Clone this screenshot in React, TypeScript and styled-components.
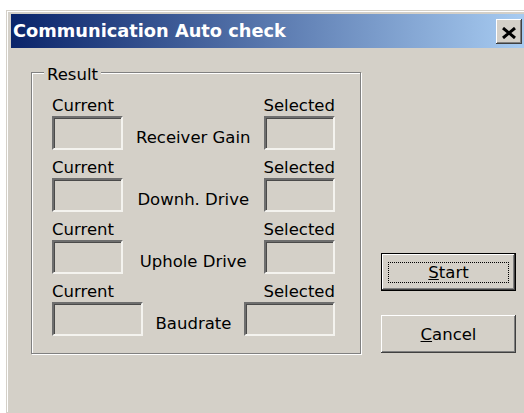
import React from 'react';
import styled, { createGlobalStyle } from 'styled-components';

const Page = createGlobalStyle`
    html, body {
        margin: 0;
        background: #ffffff;
        overflow: hidden;
    }
    body {
        font-family: "DejaVu Sans", Tahoma, sans-serif;
    }
`;

const Window = styled.div`
    box-sizing: border-box;
    margin: 10px 0 0 6px;
    width: 528px;
    min-width: 528px;
    height: 403px;
    padding: 3px 4px 0 4px;
    background: #d4d0c8;
    border: 1px solid #d4d0c8;
    box-shadow: inset 1px 1px 0 #ffffff;
    display: flex;
    flex-direction: column;
`;

const TitleBar = styled.div`
    height: 34px;
    display: flex;
    align-items: center;
    justify-content: space-between;
    padding: 0 7px 0 2px;
    background: linear-gradient(to right, #0a246a, #a6caf0 98%);
`;

const Title = styled.span`
    color: #ffffff;
    font-weight: bold;
    font-size: 17.8px;
    line-height: 20px;
`;

const CloseButton = styled.div`
    box-sizing: border-box;
    width: 26px;
    height: 25px;
    margin-top: 1px;
    display: flex;
    align-items: center;
    justify-content: center;
    padding-top: 3px;
    background: #d4d0c8;
    box-shadow: inset -1px -1px 0 #404040, inset 1px 1px 0 #ffffff,
        inset -2px -2px 0 #808080;
`;

const Body = styled.div`
    display: flex;
    align-items: flex-start;
    padding: 24px 0 0 20px;
`;

const GroupBox = styled.div`
    position: relative;
    box-sizing: border-box;
    width: 330px;
    height: 282px;
    padding: 23px 25px 0 20px;
    border: 1px solid #808080;
    box-shadow: inset 1px 1px 0 #ffffff, 1px 1px 0 #ffffff;
    display: flex;
    flex-direction: column;
    gap: 8px;
`;

const Legend = styled.span`
    position: absolute;
    top: -8px;
    left: 12px;
    padding: 0 3px;
    background: #d4d0c8;
    font-size: 16.5px;
    line-height: 20px;
    color: #000;
`;

const Row = styled.div`
    display: grid;
    grid-template-columns: auto 1fr auto;
`;

const Field = styled.div<{ right?: boolean }>`
    display: flex;
    flex-direction: column;
    align-items: ${({ right }) => (right ? 'flex-end' : 'flex-start')};
`;

const Caption = styled.span`
    font-size: 16.5px;
    line-height: 20px;
    color: #000;
`;

const ValueBox = styled.div<{ wide?: boolean }>`
    box-sizing: border-box;
    width: ${({ wide }) => (wide ? '91px' : '71px')};
    height: 34px;
    background: #d4d0c8;
    border-style: solid;
    border-width: 2px;
    border-color: #6e6e6e #f4f3ef #f4f3ef #6e6e6e;
    box-shadow: inset 1px 1px 0 #4a4a4a;
`;

const RowLabel = styled.span`
    align-self: end;
    text-align: center;
    padding-bottom: 2px;
    font-size: 16.5px;
    line-height: 20px;
    color: #000;
`;

const Buttons = styled.div`
    display: flex;
    flex-direction: column;
    gap: 24px;
    margin: 181px 0 0 20px;
`;

const Button = styled.div<{ isDefault?: boolean }>`
    box-sizing: border-box;
    width: 135px;
    height: 38px;
    display: flex;
    padding: ${({ isDefault }) => (isDefault ? '8px 6px 7px' : '0')};
    align-items: center;
    justify-content: center;
    background: #d4d0c8;
    font-size: 16.5px;
    color: #000;
    border: ${({ isDefault }) => (isDefault ? '1px solid #000' : 'none')};
    box-shadow: inset -1px -1px 0 #404040, inset 1px 1px 0 #ffffff,
        inset -2px -2px 0 #808080;
`;

const FocusRing = styled.span`
    flex: 1;
    align-self: stretch;
    display: flex;
    align-items: center;
    justify-content: center;
    border: 1px dotted #000;
`;

const rows = [
    { label: 'Receiver Gain' },
    { label: 'Downh. Drive' },
    { label: 'Uphole Drive' },
    { label: 'Baudrate', wide: true },
];

const CloseIcon = () => (
    <svg width="16" height="12" viewBox="0 0 16 12">
        <path d="M2 1 L14 11 M14 1 L2 11" stroke="#000" strokeWidth="3" />
    </svg>
);

export default function App() {
    return (
        <>
            <Page />
            <Window>
                <TitleBar>
                    <Title>Communication Auto check</Title>
                    <CloseButton>
                        <CloseIcon />
                    </CloseButton>
                </TitleBar>
                <Body>
                    <GroupBox>
                        <Legend>Result</Legend>
                        {rows.map((r) => (
                            <Row key={r.label}>
                                <Field>
                                    <Caption>Current</Caption>
                                    <ValueBox wide={r.wide} />
                                </Field>
                                <RowLabel>{r.label}</RowLabel>
                                <Field right>
                                    <Caption>Selected</Caption>
                                    <ValueBox wide={r.wide} />
                                </Field>
                            </Row>
                        ))}
                    </GroupBox>
                    <Buttons>
                        <Button isDefault>
                            <FocusRing>
                                <span><u>S</u>tart</span>
                            </FocusRing>
                        </Button>
                        <Button>
                            <span><u>C</u>ancel</span>
                        </Button>
                    </Buttons>
                </Body>
            </Window>
        </>
    );
}
